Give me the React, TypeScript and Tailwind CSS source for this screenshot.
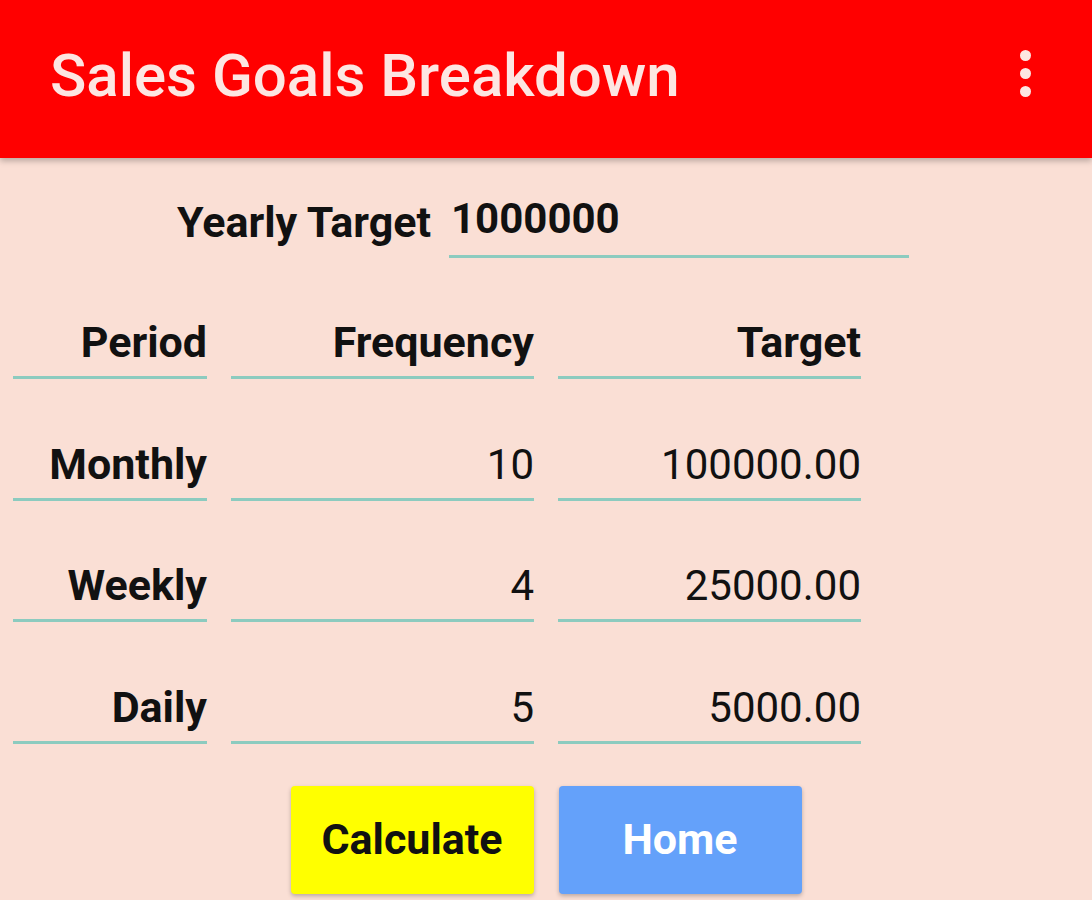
import { useState } from 'react'

const rows = [
  { period: 'Monthly', freq: '10', target: '100000.00' },
  { period: 'Weekly', freq: '4', target: '25000.00' },
  { period: 'Daily', freq: '5', target: '5000.00' },
]

const cell = 'border-b-[3px] border-[#8ccbbf] pb-[12px] text-right leading-none'

export default function App() {
  const [yearly, setYearly] = useState('1000000')

  return (
    <div className="min-h-[900px] bg-[#fadfd5] font-['Roboto',sans-serif] text-[#111]">
      {/* App bar */}
      <div className="relative z-10 flex h-[158px] items-center justify-between bg-[#ff0000] pl-[50px] pr-[61px] shadow-[0_3px_6px_rgba(0,0,0,0.25)]">
        <h1 className="pb-[6px] text-[60px] font-medium leading-none text-[#fde6e2]">Sales Goals Breakdown</h1>
        <div className="flex flex-col gap-[7px] pb-[12px]">
          <span className="h-[11px] w-[11px] rounded-full bg-[#fde6e2]" />
          <span className="h-[11px] w-[11px] rounded-full bg-[#fde6e2]" />
          <span className="h-[11px] w-[11px] rounded-full bg-[#fde6e2]" />
        </div>
      </div>

      {/* Yearly target */}
      <div className="flex items-end justify-center gap-[18px] pr-[6px] pt-[36px]">
        <label className="pb-[14px] text-[43px] font-bold leading-none">Yearly Target</label>
        <input
          value={yearly}
          onChange={e => setYearly(e.target.value)}
          className="w-[460px] border-b-[3px] border-[#8ccbbf] bg-transparent px-[2px] pb-[12px] text-[42px] font-bold leading-none outline-none"
        />
      </div>

      {/* Breakdown table */}
      <div className="w-[862px] pl-[13px]">
        <div className="grid h-[121px] grid-cols-[194px_303px_303px] items-end gap-x-[24px]">
          <div className={`${cell} text-[43px] font-bold`}>Period</div>
          <div className={`${cell} text-[43px] font-bold`}>Frequency</div>
          <div className={`${cell} text-[43px] font-bold`}>Target</div>
        </div>
        {rows.map(r => (
          <div key={r.period} className="grid h-[121.5px] grid-cols-[194px_303px_303px] items-end gap-x-[24px]">
            <div className={`${cell} text-[43px] font-bold`}>{r.period}</div>
            <div className={`${cell} text-[42px]`}>{r.freq}</div>
            <div className={`${cell} text-[42px]`}>{r.target}</div>
          </div>
        ))}
      </div>

      {/* Actions */}
      <div className="flex justify-center gap-[25px] pt-[42px]">
        <button className="h-[108px] w-[243px] rounded-[4px] bg-[#ffff00] text-[43px] font-bold text-[#111] shadow-[0_2px_4px_rgba(0,0,0,0.25)]">
          Calculate
        </button>
        <button className="h-[108px] w-[243px] rounded-[4px] bg-[#64a1fa] text-[43px] font-bold text-white shadow-[0_2px_4px_rgba(0,0,0,0.25)]">
          Home
        </button>
      </div>
    </div>
  )
}
